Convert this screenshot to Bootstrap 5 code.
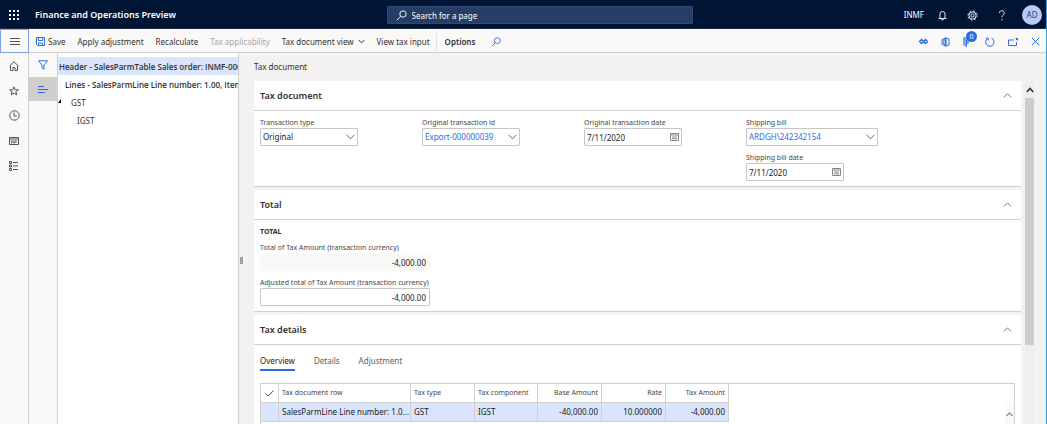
<!DOCTYPE html>
<html lang="en">
<head>
<meta charset="utf-8">
<meta name="viewport" content="width=device-width, initial-scale=1">
<title>Tax document</title>
<link href="https://cdn.jsdelivr.net/npm/bootstrap@5.3.0/dist/css/bootstrap.min.css" rel="stylesheet">
<style>
:root{--navy:#001433;--blue:#2b6be6;--ink:#323130;--line:#d2d0ce;--sel:#d9e5fc;--pane:#f3f2f1;--bar:#faf9f8}
body{font-family:"Noto Sans","Open Sans",sans-serif;font-size:8px;line-height:12px;color:var(--ink);background:#fff}
svg{display:block;fill:none;stroke:currentColor;stroke-width:1;flex:none}
button{background:none;border:0;padding:0;color:inherit}
.app{height:100vh;overflow:hidden;border-right:1px solid #3c97dc}
.topbar{height:29px;background:var(--navy);color:#fff;border-bottom:1px solid #1d2c4a;padding:2px 4px 0 9px}
.brand{font-size:9px;font-weight:600;margin-left:16px}
.search-box{width:306px;height:18px;background:#263e66;border:1px solid #304a73;border-radius:1px;padding-left:8px;gap:5px;font-size:8px}
.search-box input{background:none;border:0;outline:0;color:#fff;padding:1px 0 0;width:100%}
.search-box input::placeholder{color:#fff;opacity:1}
.side{flex:1 1 0}
.side.start{flex-basis:28px}
.topbar svg{stroke-width:.9}
.avatar{width:20px;height:20px;background:#b5cbf5;color:#2a4270;font-size:8px}
.rail{width:29px;background:var(--bar);border-right:1px solid var(--line);flex:none;color:#555}
.rail button{height:25px;width:28px}
.rail .menu-btn{height:24px;width:29px;border:1px solid #7fa3ea}
.toolbar{height:24px;background:var(--bar);border-bottom:1px solid var(--line);padding:2px 6px 0 7px}
.toolbar button{white-space:nowrap;font-size:8px}
.commands{gap:12px}
.options-tab{border-left:1px solid #e4e2e0 !important;padding-left:8px !important;margin-left:-6px;height:18px}
.blue{color:var(--blue)}
.subrail{width:29px;background:var(--bar);border-right:1px solid var(--line);flex:none}
.subrail button{height:24px;width:100%}
.subrail .on{background:#d0cecd}
.tree{width:180px;flex:none;padding-top:4px;overflow:hidden}
.tree li{height:18px;line-height:20px;white-space:nowrap;overflow:hidden}
.tree .picked{background:var(--sel)}
.tree .fw-semibold{font-family:"Open Sans","Noto Sans",sans-serif}
.tree .l0{padding-left:1px}.tree .l1{padding-left:7px}.tree .l2{padding-left:13px}.tree .l3{padding-left:19px}
.fold{left:0;top:6px}
.splitter{width:16px;background:var(--pane);border-left:1px solid var(--line);flex:none}
.grip{width:3px;height:7px;background:#a19f9d;margin:43px 0 0 1px}
.work{background:var(--pane);min-width:0}
.work h1{font-size:8px;line-height:12px;font-weight:400;padding:8px 0;margin:0}
.panel{background:#fff;border-bottom:1px solid var(--line);margin-bottom:3px}
.panel-head{height:30px;width:100%;border-bottom:1px solid var(--line);padding:0 9px 0 6px;color:#777}
.panel-head h2{font-size:9px;line-height:12px;font-weight:600;margin:0;color:var(--ink)}
.panel-body{padding:6px 6px 5px}
.fields{gap:6px 64px}
.stack{display:flex;flex-direction:column;gap:6px}
.fld{width:98px}
.fld.wide{width:132px}.fld.sum{width:170px}
.fld label{display:block;font-size:7px;line-height:11px;color:#484644;white-space:nowrap}
.fld input,.fld select{display:block;width:100%;height:18px;border:1px solid #c8c6c4;border-radius:1px;padding:0 3px 0 2px;font-size:8px;line-height:16px;color:#222;background:#fff;appearance:none}
.fld select.blue{color:var(--blue)}
.fld input[readonly]{background:var(--bar);border-color:var(--bar)}
.over{position:absolute;right:3px;top:4px;color:#666;pointer-events:none}
.chev{top:6px}
button.over{pointer-events:auto;color:#888}
.sub{font-size:7px;line-height:11px;font-weight:700;margin:0 0 5px}
.tabs{gap:19px;margin-bottom:12px}
.tabs button{font-size:8px;line-height:14px;height:20px;color:#605e5c;border-bottom:2px solid transparent;padding-top:2px}
.tabs .on{color:#222;border-color:var(--blue)}
.grid-box{border:1px solid var(--line);border-bottom:0;height:80px}
.lines{table-layout:fixed;width:468px;border-collapse:separate;border-spacing:0;align-self:flex-start}
.lines th,.lines td{height:19px;padding:0 3px;border-right:1px solid var(--line);border-bottom:1px solid var(--line);white-space:nowrap;overflow:hidden;text-overflow:ellipsis}
.lines th{font-size:7px;font-weight:400;color:#484644}
.lines td{background:var(--sel);color:#222}
.lines td:nth-child(2){padding-right:0}
.to-top{background:var(--bar);width:9px;height:24px;color:#999;margin-top:18px}
.scroller{width:9px;background:#eee;margin:28px 12px 0 4px;flex:none}
.thumb{height:247px;background:#cdcdcd}
.scroller button{height:17px}
.badge-dot{position:absolute;left:3px;top:-5px;width:11px;height:11px;border-radius:50%;background:var(--blue);color:#fff;font-size:7px;line-height:11px;text-align:center}
</style>
</head>
<body>
<div class="app d-flex flex-column">
<header class="topbar d-flex align-items-center flex-shrink-0">
  <div class="side start d-flex align-items-center">
    <button aria-label="Apps"><svg width="10" height="10" viewBox="0 0 10 10"><path stroke-width="2" stroke-dasharray="2 2" d="M0 1h10M0 5h10M0 9h10"/></svg></button>
    <span class="brand">Finance and Operations Preview</span>
  </div>
  <div class="search-box d-flex align-items-center">
    <svg width="11" height="11" viewBox="0 0 11 11"><circle cx="7" cy="4" r="3.2"/><path d="M4.6 6.4.8 10.2"/></svg>
    <input type="text" placeholder="Search for a page" aria-label="Search for a page">
  </div>
  <div class="side d-flex align-items-center justify-content-end">
    <span>INMF</span>
    <button aria-label="Notifications" style="margin-left:14px"><svg width="9" height="11" viewBox="0 0 9 11"><path d="M.5 8.500h8M2 8.500V4a2.500 2.500 0 0 1 5 0v4.500M3.500 9a1 1 0 0 0 2 0"/></svg></button>
    <button aria-label="Settings" class="mx-3 px-1"><svg width="11" height="11" viewBox="0 0 11 11"><circle cx="5.500" cy="5.500" r="1.600"/><circle cx="5.500" cy="5.500" r="3.600"/><circle cx="5.500" cy="5.500" r="4.600" stroke-dasharray="1.800 1.810"/></svg></button>
    <button aria-label="Help"><svg width="8" height="11" viewBox="0 0 8 11"><path d="M1.500 3a2.400 2.400 0 1 1 4 1.800C4.500 5.700 4 6 4 7.500M4 9v1.400"/></svg></button>
    <button class="avatar rounded-circle ms-3">AD</button>
  </div>
</header>

<div class="d-flex flex-grow-1 overflow-hidden">
<nav class="rail" aria-label="Main">
  <button class="menu-btn d-flex align-items-center justify-content-center" aria-label="Menu"><svg width="10" height="7" viewBox="0 0 10 7"><path d="M0 .5h10M0 3.500h10M0 6.500h10"/></svg></button>
  <button class="d-flex align-items-center justify-content-center" aria-label="Home"><svg width="10" height="10" viewBox="0 0 10 10"><path d="M.5 5 5 .8 9.500 5M1.500 4.500v5H4V6.500h2v3h2.500v-5"/></svg></button>
  <button class="d-flex align-items-center justify-content-center" aria-label="Favorites"><svg width="10" height="10" viewBox="0 0 10 10"><path d="m5 .8 1.200 3h3.100L6.800 5.700l1 3.300L5 7.100 2.200 9l1-3.300L.7 3.800h3.100z"/></svg></button>
  <button class="d-flex align-items-center justify-content-center" aria-label="Recent"><svg width="11" height="11" viewBox="0 0 11 11"><circle cx="5.500" cy="5.500" r="4.700"/><path d="M5 2.500V6h3"/></svg></button>
  <button class="d-flex align-items-center justify-content-center" aria-label="Workspaces"><svg width="10" height="8" viewBox="0 0 10 8"><path d="M.5.5h9v7h-9zM.5 2h9"/><path stroke-width=".8" d="M2.300 3.700h2v2.300h-2zM5.700 6.500V3.800H8M5.700 5.200h2"/></svg></button>
  <button class="d-flex align-items-center justify-content-center" aria-label="Modules"><svg width="10" height="10" viewBox="0 0 10 10"><path d="M.5.5h2v2h-2zM.5 4h2v2h-2zM.5 7.500h2v2h-2zM4 1.500h5M4 5h5M4 8.500h5"/></svg></button>
</nav>

<div class="d-flex flex-column flex-grow-1" style="min-width:0">
  <div class="toolbar d-flex align-items-center justify-content-between flex-shrink-0">
    <div class="commands d-flex align-items-center">
      <button class="d-flex align-items-center" style="gap:3px"><svg class="blue" width="9" height="9" viewBox="0 0 9 9"><path d="M.5.5h8v8h-7l-1-1zM2.300.5v3h4.400v-3M2.500 8.500V6h4v2.500"/></svg>Save</button>
      <button>Apply adjustment</button>
      <button>Recalculate</button>
      <button disabled style="color:#a6a4a2">Tax applicability</button>
      <button class="d-flex align-items-center gap-1">Tax document view<svg width="7" height="5" viewBox="0 0 7 5"><path d="m.5.8 3 3 3-3"/></svg></button>
      <button>View tax input</button>
      <button class="options-tab fw-semibold">Options</button>
      <button class="blue ms-1" aria-label="Find"><svg width="10" height="10" viewBox="0 0 11 11"><circle cx="7" cy="4" r="3.200"/><path d="M4.600 6.400.8 10.200"/></svg></button>
    </div>
    <div class="d-flex align-items-center blue" style="gap:13px">
      <button aria-label="Link"><svg width="9" height="7" viewBox="0 0 9 7"><path stroke-width="1.500" d="m4.500 3.500-2-2-2 2 2 2 4-4 2 2-2 2z"/></svg></button>
      <button aria-label="Office"><svg width="9" height="10" viewBox="0 0 9 10"><path d="M4.500 1 1 2.700v4.600L4.500 9M4.500 2.500 2.800 3.200v3.600l1.700.7"/><path fill="currentColor" stroke="none" d="M4 .5h1.500v9H4z"/><path d="M5.500 1.200 8 2v6l-2.500.8"/></svg></button>
      <button class="position-relative" aria-label="Attachments"><svg width="9" height="11" viewBox="0 0 9 11"><path fill="#7ea5f0" stroke="none" d="M0 1h6v7H3.500V11L0 9z"/><path d="M3.500 10.500V4"/></svg><span class="badge-dot">0</span></button>
      <button aria-label="Refresh"><svg width="10" height="10" viewBox="0 0 10 10"><path d="M6.500 1.200A4.200 4.200 0 1 1 3 1.300M1 1.200h2.300v2.300"/></svg></button>
      <button aria-label="Open in new window"><svg width="10" height="8" viewBox="0 0 10 8"><path d="M6 2H.5v5.500h8V4M7.500.5h2v2M9.500.5 8 2"/></svg></button>
      <button aria-label="Close"><svg width="9" height="9" viewBox="0 0 9 9"><path d="m.8.8 7.400 7.400M8.200.8.8 8.200"/></svg></button>
    </div>
  </div>

  <div class="d-flex flex-grow-1 overflow-hidden">
    <div class="subrail blue">
      <button class="d-flex align-items-center justify-content-center" aria-label="Filter"><svg width="10" height="10" viewBox="0 0 10 10"><path d="M.5.8h9L6 5v4.200L4 8V5z"/></svg></button>
      <button class="on d-flex align-items-center justify-content-center" aria-label="Outline"><svg width="10" height="7" viewBox="0 0 10 7"><path d="M0 .5h6M0 3.500h10M0 6.500h7"/></svg></button>
    </div>
    <ul class="tree list-unstyled mb-0">
      <li class="picked l0 fw-semibold">Header - SalesParmTable Sales order: INMF-000</li>
      <li class="l1 fw-semibold">Lines - SalesParmLine Line number: 1.00, Item</li>
      <li class="l2 position-relative"><svg class="fold position-absolute" width="3" height="4" viewBox="0 0 3 4"><path fill="#000" stroke="none" d="M3 0v4H0z"/></svg>GST</li>
      <li class="l3">IGST</li>
    </ul>
    <div class="splitter d-flex align-items-center"><div class="grip"></div></div>
    <main class="work d-flex flex-grow-1">
      <div class="flex-grow-1" style="min-width:0">
        <h1>Tax document</h1>
        <section class="panel">
          <button class="panel-head d-flex align-items-center justify-content-between"><h2>Tax document</h2><svg width="9" height="5" viewBox="0 0 9 5"><path d="m.8 4.500 3.700-3.700 3.700 3.700"/></svg></button>
          <div class="panel-body fields d-flex flex-wrap">
            <div class="fld"><label for="ty">Transaction type</label><div class="position-relative"><select id="ty"><option>Original</option></select><svg class="over chev" width="9" height="6" viewBox="0 0 9 6"><path d="m.6.8 3.900 4L8.400.8"/></svg></div></div>
            <div class="fld"><label for="oid">Original transaction id</label><div class="position-relative"><select id="oid" class="blue"><option>Export-000000039</option></select><svg class="over chev" width="9" height="6" viewBox="0 0 9 6"><path d="m.6.8 3.900 4L8.400.8"/></svg></div></div>
            <div class="fld"><label for="od">Original transaction date</label><div class="position-relative"><input id="od" type="text" value="7/11/2020"><button class="over" aria-label="Pick date"><svg width="9" height="9" viewBox="0 0 9 9"><path d="M.5 1.500h8v7h-8zM.5 3h8M2 5h5M2 6.800h5"/></svg></button></div></div>
            <div class="stack">
              <div class="fld wide"><label for="sb">Shipping bill</label><div class="position-relative"><select id="sb" class="blue"><option>ARDGH\242342154</option></select><svg class="over chev" width="9" height="6" viewBox="0 0 9 6"><path d="m.6.8 3.900 4L8.400.8"/></svg></div></div>
              <div class="fld"><label for="sd">Shipping bill date</label><div class="position-relative"><input id="sd" type="text" value="7/11/2020"><button class="over" aria-label="Pick date"><svg width="9" height="9" viewBox="0 0 9 9"><path d="M.5 1.500h8v7h-8zM.5 3h8M2 5h5M2 6.800h5"/></svg></button></div></div>
            </div>
          </div>
        </section>
        <section class="panel">
          <button class="panel-head d-flex align-items-center justify-content-between"><h2>Total</h2><svg width="9" height="5" viewBox="0 0 9 5"><path d="m.8 4.500 3.700-3.700 3.700 3.700"/></svg></button>
          <div class="panel-body">
            <h3 class="sub">TOTAL</h3>
            <div class="stack">
              <div class="fld sum"><label for="t1">Total of Tax Amount (transaction currency)</label><input id="t1" class="text-end" type="text" readonly value="-4,000.00"></div>
              <div class="fld sum"><label for="t2">Adjusted total of Tax Amount (transaction currency)</label><input id="t2" class="text-end" type="text" value="-4,000.00"></div>
            </div>
          </div>
        </section>
        <section class="panel">
          <button class="panel-head d-flex align-items-center justify-content-between"><h2>Tax details</h2><svg width="9" height="5" viewBox="0 0 9 5"><path d="m.8 4.500 3.700-3.700 3.700 3.700"/></svg></button>
          <div class="panel-body">
            <div class="tabs d-flex" role="tablist"><button class="on" role="tab">Overview</button><button role="tab">Details</button><button role="tab">Adjustment</button></div>
            <div class="grid-box d-flex justify-content-between">
              <table class="lines">
                <colgroup><col style="width:18px"><col style="width:132px"><col style="width:64px"><col style="width:63px"><col style="width:64px"><col style="width:64px"><col style="width:63px"></colgroup>
                <thead><tr><th aria-label="Select"><svg class="mx-auto" width="9" height="7" viewBox="0 0 9 7"><path d="m.5 3.500 2.500 2.500L8.500.7"/></svg></th><th>Tax document row</th><th>Tax type</th><th>Tax component</th><th class="text-end">Base Amount</th><th class="text-end">Rate</th><th class="text-end">Tax Amount</th></tr></thead>
                <tbody><tr><td></td><td>SalesParmLine Line number: 1.0...</td><td>GST</td><td>IGST</td><td class="text-end">-40,000.00</td><td class="text-end">10.000000</td><td class="text-end">-4,000.00</td></tr></tbody>
              </table>
              <button class="to-top d-flex align-items-center justify-content-center" aria-label="Scroll up"><svg width="7" height="5" viewBox="0 0 7 5"><path stroke-width="1.500" d="m.5 4 3-3 3 3"/></svg></button>
            </div>
          </div>
        </section>
      </div>
      <div class="scroller">
        <button class="w-100 d-flex align-items-center justify-content-center" aria-label="Scroll up"><svg width="8" height="6" viewBox="0 0 8 6"><path stroke-width="1.600" d="m.8 5 3.200-3.500L7.200 5"/></svg></button>
        <div class="thumb"></div>
      </div>
    </main>
  </div>
</div>
</div>
</div>
<script src="https://cdn.jsdelivr.net/npm/bootstrap@5.3.0/dist/js/bootstrap.bundle.min.js"></script>
</body>
</html>
